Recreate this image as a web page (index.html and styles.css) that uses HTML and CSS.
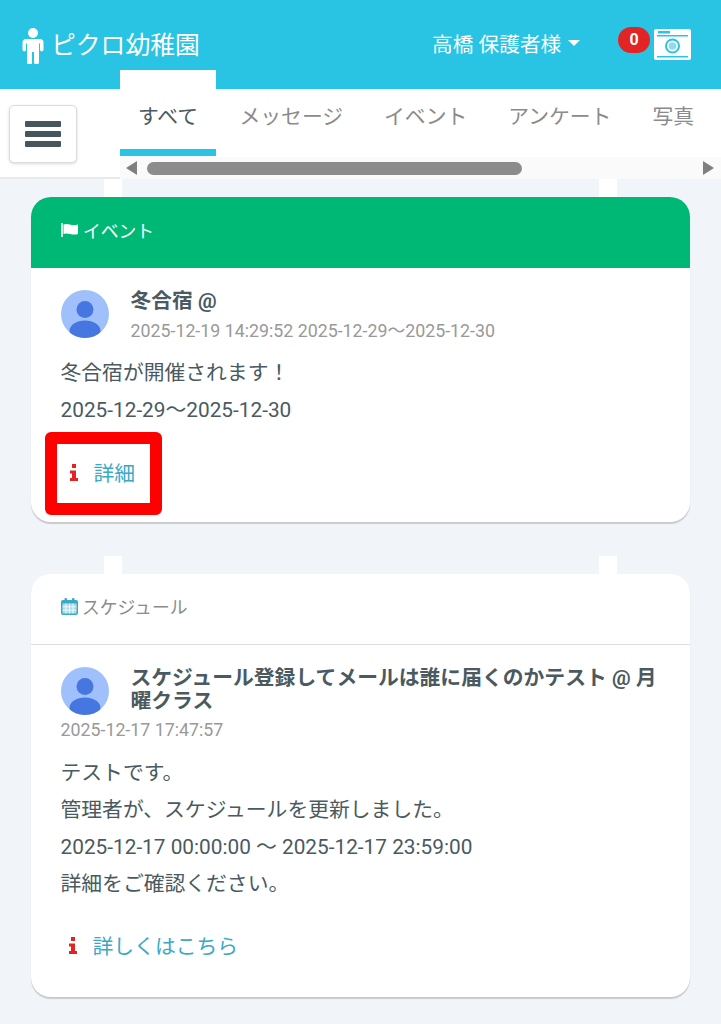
FILE: index.html
```html
<!DOCTYPE html>
<html lang="ja">
<head>
  <meta charset="UTF-8">
  <title>ピクロ幼稚園</title>
  <link rel="stylesheet" href="styles.css">
</head>
<body>
  <header class="topbar">
    <div class="brand">
      <svg class="brand-icon" viewBox="0 0 22 36" width="22" height="36">
        <circle cx="11" cy="5" r="5" fill="#fff"/>
        <path d="M4 11h14a3.500 3.500 0 0 1 3.500 3.500v7.500a1.800 1.800 0 0 1-3.500 0v-6.500h-1v18.500a2.500 2.500 0 0 1-5 0V24h-2v10.500a2.500 2.500 0 0 1-5 0V15.500h-1V22a1.800 1.800 0 0 1-3.500 0v-7.500A3.500 3.500 0 0 1 4 11z" fill="#fff"/>
      </svg>
      <span>ピクロ幼稚園</span>
    </div>
    <div class="user">高橋 保護者様<span class="caret"></span></div>
    <div class="album">
      <span class="badge">0</span>
      <svg viewBox="0 0 37 31" width="37" height="31">
        <rect x="0" y="0" width="37" height="31" rx="2" fill="#fff"/>
        <rect x="4" y="2" width="12" height="2.500" fill="#29c3e3"/>
        <rect x="3" y="6" width="31" height="1.500" fill="#29c3e3"/>
        <rect x="3" y="27" width="31" height="1.500" fill="#29c3e3"/>
        <circle cx="18.500" cy="17" r="6.500" fill="none" stroke="#29c3e3" stroke-width="2"/>
        <circle cx="18.500" cy="17" r="3.800" fill="#8fdcec"/>
      </svg>
    </div>
  </header>

  <nav class="subnav">
    <div class="menu-cell">
      <button class="menu-btn"><span></span><span></span><span></span></button>
    </div>
    <div class="tab-area">
      <ul class="tabs">
        <li class="tab active">すべて</li>
        <li class="tab">メッセージ</li>
        <li class="tab">イベント</li>
        <li class="tab">アンケート</li>
        <li class="tab">写真</li>
      </ul>
      <div class="scroller">
        <span class="arrow-left"></span>
        <div class="track"><div class="thumb"></div></div>
        <span class="arrow-right"></span>
      </div>
    </div>
  </nav>

  <main class="feed">
    <!-- event -->
    <article class="card">
      <div class="card-head green">
        <svg viewBox="0 0 18 16" width="18" height="16"><path d="M1 1v14" stroke="#fff" stroke-width="1.600"/><path d="M2.500 2.500c4-2 8 2 14.500 0v9.500c-6 2-10-2-14.500 0z" fill="#fff"/></svg>
        <span>イベント</span>
      </div>
      <div class="card-body">
        <div class="meta">
          <svg class="avatar" viewBox="0 0 48 48" width="48" height="48">
            <clipPath id="av1"><circle cx="24" cy="24" r="24"/></clipPath>
            <circle cx="24" cy="24" r="24" fill="#a0c0fb"/>
            <g clip-path="url(#av1)">
              <circle cx="24" cy="19.500" r="8.500" fill="#4676df"/>
              <ellipse cx="24" cy="41" rx="15.500" ry="10.500" fill="#4676df"/>
            </g>
          </svg>
          <div class="meta-text">
            <h2 class="title">冬合宿 @</h2>
            <div class="stamp">2025-12-19 14:29:52 2025-12-29〜2025-12-30</div>
          </div>
        </div>
        <p class="line first">冬合宿が開催されます！</p>
        <p class="line">2025-12-29〜2025-12-30</p>
        <div class="detail-wrap">
          <a class="detail boxed">
            <svg class="info" viewBox="0 0 8 17" width="8" height="17"><path d="M2 0h4v4H2zM0 6.500h6V14h2v3H0v-3h2V9.500H0z" fill="#e32424"/></svg>
            詳細
          </a>
        </div>
      </div>
    </article>

    <!-- schedule -->
    <article class="card second">
      <div class="card-head plain">
        <svg viewBox="0 0 17 17" width="17" height="17">
          <rect x="0" y="2" width="17" height="15" rx="2" fill="#3aa9c6"/>
          <rect x="3.500" y="0" width="2.500" height="4" rx="1" fill="#3aa9c6"/>
          <rect x="11" y="0" width="2.500" height="4" rx="1" fill="#3aa9c6"/>
          <rect x="1.500" y="5.500" width="14" height="10" fill="#a9dcea"/>
          <path d="M1.500 8.800h14M1.500 12.100h14M5 5.500v10M8.500 5.500v10M12 5.500v10" stroke="#fff" stroke-width="0.800"/>
        </svg>
        <span>スケジュール</span>
      </div>
      <div class="card-body">
        <div class="meta">
          <svg class="avatar" viewBox="0 0 48 48" width="48" height="48">
            <clipPath id="av2"><circle cx="24" cy="24" r="24"/></clipPath>
            <circle cx="24" cy="24" r="24" fill="#a0c0fb"/>
            <g clip-path="url(#av2)">
              <circle cx="24" cy="19.500" r="8.500" fill="#4676df"/>
              <ellipse cx="24" cy="41" rx="15.500" ry="10.500" fill="#4676df"/>
            </g>
          </svg>
          <div class="meta-text">
            <h2 class="title">スケジュール登録してメールは誰に届くのかテスト @ 月曜クラス</h2>
          </div>
        </div>
        <div class="stamp under">2025-12-17 17:47:57</div>
        <p class="line tight first">テストです。</p>
        <p class="line tight">管理者が、スケジュールを更新しました。</p>
        <p class="line tight">2025-12-17 00:00:00 〜 2025-12-17 23:59:00</p>
        <p class="line tight">詳細をご確認ください。</p>
        <div class="detail-wrap lower">
          <a class="detail">
            <svg class="info" viewBox="0 0 8 17" width="8" height="17"><path d="M2 0h4v4H2zM0 6.500h6V14h2v3H0v-3h2V9.500H0z" fill="#e32424"/></svg>
            詳しくはこちら
          </a>
        </div>
      </div>
    </article>
  </main>
</body>
</html>
```

FILE: styles.css
```css
* {
  box-sizing: border-box;
}
html, body {
  height: 1024px;
  overflow: hidden;
}
body {
  margin: 0;
  background: #f1f5f9;
  font-family: Roboto, "Noto Sans CJK JP", sans-serif;
  color: #4a5a60;
}

/* header */
.topbar {
  height: 89px;
  background: #29c3e3;
  color: #fff;
  display: flex;
  align-items: center;
  padding-left: 22px;
}
.brand {
  display: flex;
  align-items: center;
  gap: 7px;
  font-size: 24.800px;
  width: 410px;
  margin-top: -4px;
}
.brand-icon {
  margin-top: 7px;
}
.user {
  display: flex;
  align-items: center;
  font-size: 20.700px;
  width: 185px;
  margin-top: -4px;
}
.caret {
  margin-left: 7px;
  border-top: 6px solid #fff;
  border-left: 6px solid transparent;
  border-right: 6px solid transparent;
}
.album {
  position: relative;
  margin-left: 37px;
}
.album svg {
  display: block;
}
.badge {
  position: absolute;
  left: -36px;
  top: -2px;
  width: 32px;
  height: 26px;
  border-radius: 13px;
  background: #e32424;
  color: #fff;
  font-size: 16px;
  font-weight: 700;
  line-height: 26px;
  text-align: center;
}

/* tabs row */
.subnav {
  display: flex;
  height: 90px;
  background: #fff;
}
.menu-cell {
  width: 120px;
  height: 90px;
  padding: 16px 0 0 9px;
  border-bottom: 2px solid #e8e9ea;
}
.menu-btn {
  display: flex;
  flex-direction: column;
  justify-content: center;
  gap: 4px;
  width: 68px;
  height: 58px;
  padding: 0 15px;
  background: #fff;
  border: 1px solid #dcdcdc;
  border-radius: 5px;
  box-shadow: 0 1px 3px rgba(0, 0, 0, 0.15);
}
.menu-btn span {
  display: block;
  height: 6px;
  border-radius: 1px;
  background: #46565c;
}
.tab-area {
  flex: 1;
  min-width: 0;
}
.tabs {
  display: flex;
  margin: 0;
  padding: 0;
  list-style: none;
  height: 66px;
  white-space: nowrap;
  font-size: 20.800px;
  color: #8b8b8b;
}
.tab {
  padding: 13px 20.500px 0;
  line-height: 30px;
}
.tab.active {
  width: 96px;
  height: 86px;
  margin-top: -19px;
  margin-right: 3px;
  padding: 32px 0 0;
  text-align: center;
  background: #fff;
  color: #4a5a60;
  border-bottom: 7px solid #29c3e3;
  position: relative;
}
.scroller {
  display: flex;
  align-items: center;
  height: 22px;
  margin-top: 2px;
  padding: 0 7px 0 6px;
  background: #fafafa;
  position: relative;
}
.arrow-left {
  border-right: 11px solid #7f7f7f;
  border-top: 7px solid transparent;
  border-bottom: 7px solid transparent;
}
.arrow-right {
  border-left: 11px solid #7f7f7f;
  border-top: 7px solid transparent;
  border-bottom: 7px solid transparent;
}
.track {
  flex: 1;
  padding: 0 10px;
}
.thumb {
  width: 375px;
  height: 13px;
  border-radius: 7px;
  background: #8c8c8c;
}

/* cards */
.feed {
  padding: 18px 31px 0;
}
.card {
  position: relative;
  background: #fff;
  border-radius: 20px;
  box-shadow: 0 2px 1px #c9c9ce;
}
.card.second {
  margin-top: 52px;
  height: 423px;
}
.card::before, .card::after {
  content: "";
  position: absolute;
  top: -18px;
  width: 18px;
  height: 18px;
  background: #fff;
}
.card::before {
  left: 73px;
}
.card::after {
  left: 568px;
}
.card-head {
  display: flex;
  align-items: center;
  gap: 4px;
  height: 71px;
  padding: 0 30px 6px;
  font-size: 17.800px;
  border-radius: 20px 20px 0 0;
}
.card-head.green {
  background: #00b875;
  color: #fff;
}
.card-head.plain {
  color: #8b8b8b;
  border-bottom: 1px solid #dedede;
}
.card-body {
  padding: 22px 30px 0 29.500px;
}
.meta {
  display: flex;
  gap: 22px;
  align-items: flex-start;
}
.avatar {
  flex: none;
}
.meta-text {
  min-width: 0;
}
.title {
  margin: 0;
  font-size: 20.800px;
  font-weight: 700;
  line-height: 23px;
  color: #4a5a60;
}
.stamp {
  margin-top: 8px;
  font-size: 17.800px;
  line-height: 20px;
  color: #999;
}
.stamp.under {
  margin-top: 5px;
  margin-bottom: 1px;
}
.line {
  margin: 13px 0 0;
  font-size: 20.800px;
  line-height: 24px;
}
.line.first {
  margin-top: 20px;
}
.line.tight {
  margin-top: 13px;
}
.line.tight.first {
  margin-top: 21px;
}
.detail-wrap {
  margin: 10px 0 0 -15.500px;
  height: 90px;
}
.detail-wrap.lower {
  margin-top: 19px;
}
.detail {
  display: inline-flex;
  align-items: center;
  height: 60px;
  padding-left: 24px;
  font-size: 20.800px;
  color: #3aa9c6;
  white-space: nowrap;
}
.detail.boxed {
  width: 117px;
  height: 83px;
  padding: 0 0 3px 13px;
  border: 12px solid #f00;
  border-radius: 6px;
}
.info {
  flex: none;
  margin-right: 15.500px;
}
```
